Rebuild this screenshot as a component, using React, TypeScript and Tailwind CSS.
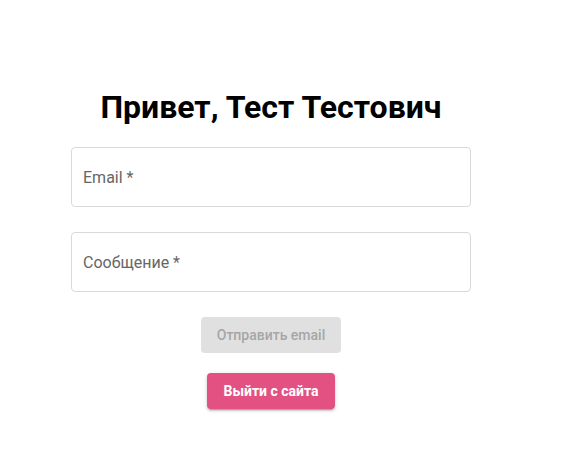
import React from "react";

const Field = ({ label }: { label: string }) => (
  <div className="w-[400px] h-[60px] border border-[#d9d9d9] rounded-[4px] flex items-center px-[11px] pt-[2px]">
    <span className="text-[16px] text-[#666666]">{label}</span>
  </div>
);

const App = () => {
  return (
    <div
      className="w-[574px] h-[470px] bg-white flex flex-col items-center pr-[32px] pt-[84px]"
      style={{ fontFamily: "Roboto, 'Noto Sans', sans-serif" }}
    >
      <h1 className="text-[32px] font-bold leading-[46px] text-black">Привет, Тест Тестович</h1>
      <div className="flex flex-col gap-[25px] mt-[17px]">
        <Field label="Email *" />
        <Field label="Сообщение *" />
      </div>
      <button
        disabled
        className="mt-[25px] h-[36px] px-[16px] rounded-[4px] bg-[#e0e0e0] text-[#a6a6a6] text-[14px] font-medium"
      >
        Отправить email
      </button>
      <button className="mt-[20px] h-[36px] px-[16px] rounded-[4px] bg-[#e35183] text-white text-[14px] font-bold shadow-[0_3px_1px_-2px_rgba(0,0,0,0.2),0_2px_2px_0_rgba(0,0,0,0.14),0_1px_5px_0_rgba(0,0,0,0.12)]">
        Выйти с сайта
      </button>
    </div>
  );
};

export default App;
